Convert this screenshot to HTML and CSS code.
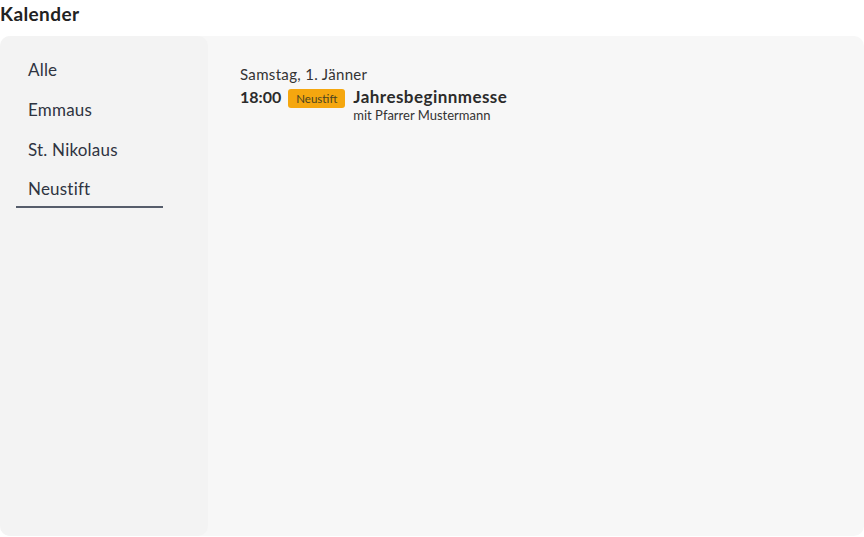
FILE: index.html
```html
<!DOCTYPE html>
<html lang="de">
<head>
<meta charset="utf-8">
<title>Kalender</title>
<link rel="stylesheet" href="styles.css">
</head>
<body>
<h1 class="title">Kalender</h1>
<div class="panel">
  <nav class="side">
    <a class="nav-item">Alle</a>
    <a class="nav-item">Emmaus</a>
    <a class="nav-item">St. Nikolaus</a>
    <a class="nav-item active">Neustift</a>
  </nav>
  <main class="content">
    <div class="day">Samstag, 1. Jänner</div>
    <div class="event">
      <span class="time">18:00</span>
      <span class="badge">Neustift</span>
      <div class="info">
        <div class="ev-title">Jahresbeginnmesse</div>
        <div class="ev-sub">mit Pfarrer Mustermann</div>
      </div>
    </div>
  </main>
</div>
</body>
</html>
```
FILE: styles.css
```css
html, body {
  margin: 0;
  padding: 0;
  background: #ffffff;
  font-family: Lato, "Open Sans", sans-serif;
  color: #2b2b2b;
}
.title {
  margin: 0;
  height: 36px;
  padding-top: 2px;
  box-sizing: border-box;
  font-size: 19px;
  letter-spacing: 0.4px;
  line-height: 24px;
  font-weight: 700;
  color: #222222;
}
.panel {
  display: flex;
  height: 500px;
  background: #f7f7f7;
  border-radius: 10px;
}
.side {
  width: 208px;
  flex: none;
  background: #f3f3f3;
  border-radius: 10px;
  padding-top: 14px;
  box-sizing: border-box;
  display: flex;
  flex-direction: column;
}
.nav-item {
  display: block;
  margin-left: 16px;
  width: 147px;
  box-sizing: border-box;
  padding-left: 12px;
  height: 40px;
  line-height: 40px;
  font-size: 17px;
  letter-spacing: 0.2px;
  color: #2f3441;
  border-bottom: 2px solid transparent;
}
.nav-item.active {
  height: 38px;
  line-height: 38px;
  border-bottom-color: #565d6b;
}
.content {
  flex: 1;
  padding: 27px 0 0 32px;
}
.day {
  font-size: 15px;
  letter-spacing: 0.33px;
  line-height: 22px;
  color: #333333;
}
.event {
  display: flex;
  align-items: flex-start;
  margin-top: 2px;
}
.time {
  font-size: 16px;
  font-weight: 700;
  line-height: 20px;
  color: #2b2b2b;
}
.badge {
  margin-left: 7px;
  margin-top: 2px;
  height: 19px;
  line-height: 19px;
  padding: 0 8px;
  background: #f5a70f;
  color: #4a4320;
  font-size: 11.5px;
  border-radius: 3px;
}
.info {
  margin-left: 8px;
}
.ev-title {
  font-size: 17px;
  letter-spacing: 0.45px;
  font-weight: 700;
  line-height: 20px;
  color: #2b2b2b;
}
.ev-sub {
  font-size: 13px;
  line-height: 16px;
  color: #333333;
}
```
